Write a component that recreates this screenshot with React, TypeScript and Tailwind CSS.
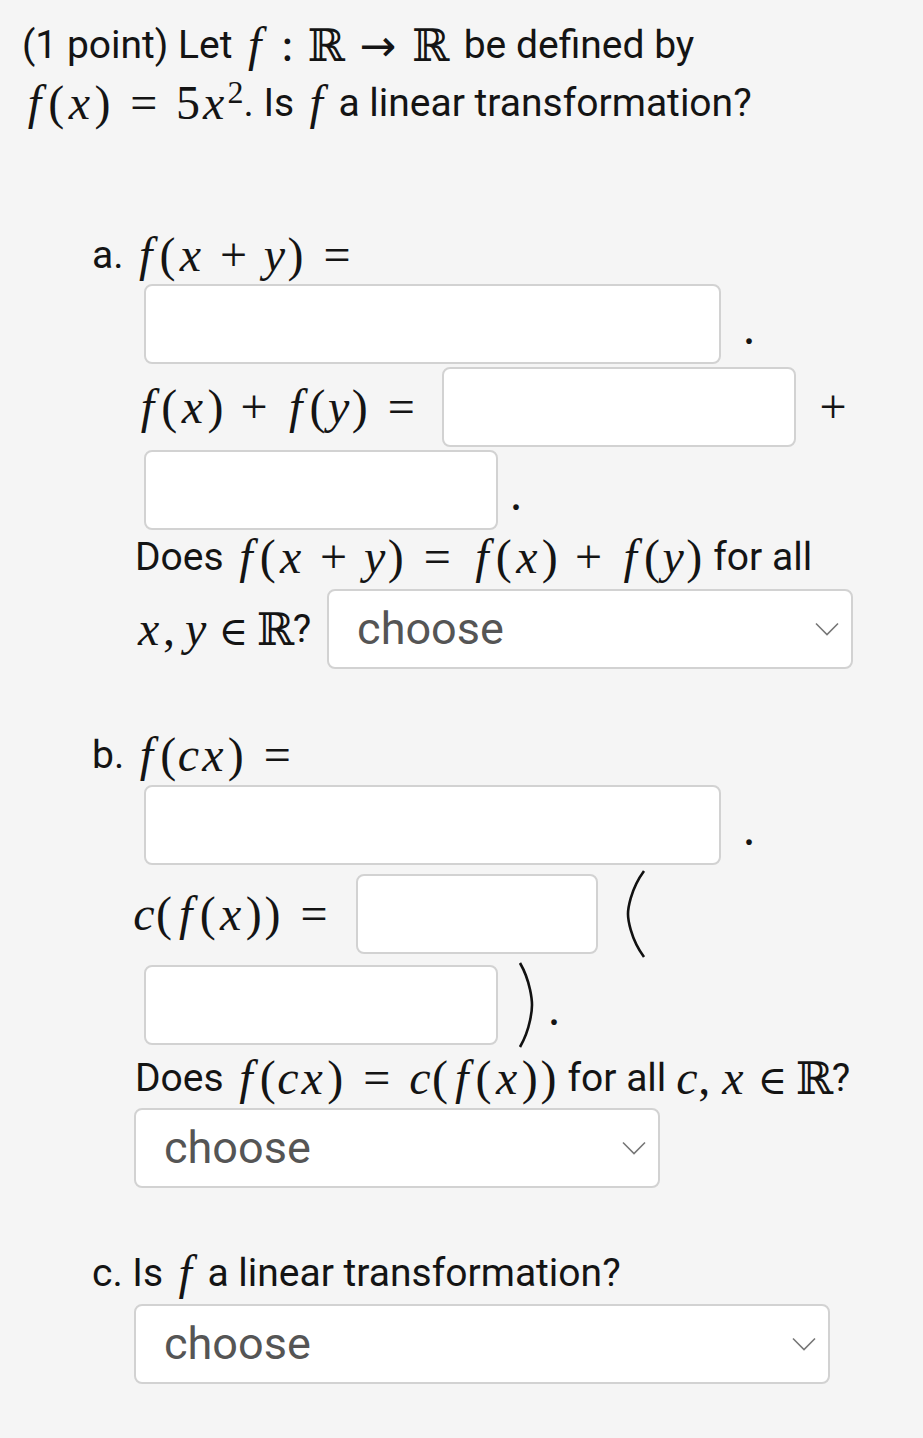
import React from 'react';

const mathCls = "font-['Liberation_Serif','DejaVu_Serif',serif] text-[48px] leading-none whitespace-nowrap";

// glyph boxes sized to Computer Modern advance widths
const F = () => <span className="inline-block w-[0.52em] text-center italic">f</span>;
const X = () => <span className="inline-block w-[0.57em] text-center italic">x</span>;
const Y = () => <span className="inline-block w-[0.49em] text-center italic">y</span>;
const C = () => <span className="inline-block w-[0.45em] text-center italic">c</span>;
const L = () => <span className="inline-block w-[0.39em] text-center">(</span>;
const R = () => <span className="inline-block w-[0.39em] text-center">)</span>;
const Plus = () => <span className="mx-[0.22em] inline-block w-[0.78em] text-center">+</span>;
const Eq = () => <span className="mx-[0.28em] inline-block w-[0.78em] text-center">=</span>;
const In = () => (
  <span className="mx-[0.28em] inline-block w-[0.67em] text-center font-['DejaVu_Serif',serif] text-[40px]">∈</span>
);
const Comma = () => <span className="mr-[0.17em] inline-block w-[0.28em] text-center">,</span>;
const RR = () => (
  <span className="inline-block w-[0.8em] text-center font-['DejaVu_Serif',serif] text-[45px]">ℝ</span>
);

function Box({ w }: { w: string }) {
  return (
    <input
      type="text"
      className={`h-[80px] ${w} rounded-[8px] border-2 border-[#d2d2d2] bg-white outline-none`}
    />
  );
}

function Choose({ w }: { w: string }) {
  return (
    <div
      className={`flex h-[80px] ${w} items-center justify-between rounded-[8px] border-2 border-[#d2d2d2] bg-white pl-[28px] pr-[12px]`}
    >
      <span className="text-[45px] text-[#555]">choose</span>
      <svg width="24" height="14" viewBox="0 0 24 14" fill="none">
        <path d="M1 1.5 L12 12.5 L23 1.5" stroke="#777" strokeWidth="1.6" />
      </svg>
    </div>
  );
}

function Dot({ ml }: { ml: string }) {
  return <span className={`${mathCls} ${ml} mt-[8px]`}>.</span>;
}

export default function App() {
  return (
    <div className="min-h-[1438px] bg-[#f5f5f5] font-['Roboto',sans-serif] text-[39px] text-[#141414]">
      <div className="pl-[22px] pt-[16px]">
        <div className="flex h-[58px] items-center whitespace-nowrap">
          <span>(1 point) Let&nbsp;</span>
          <span className={mathCls}>
            <F />
            <span className="mx-[0.28em]">:</span>
            <RR />
            <span className="mx-[0.28em] inline-block w-[1em] text-center font-['DejaVu_Sans',sans-serif] text-[44px]">→</span>
            <RR />
          </span>
          <span className="ml-[6px]">&nbsp;be defined by</span>
        </div>
        <div className="flex h-[58px] items-center whitespace-nowrap">
          <span className={mathCls}>
            <F />
            <L />
            <X />
            <R />
            <Eq />5<X />
            <sup className="text-[32px]">2</sup>
          </span>
          <span>. Is&nbsp;</span>
          <span className={mathCls}>
            <F />
          </span>
          <span>&nbsp;a linear transformation?</span>
        </div>
      </div>

      {/* part a */}
      <div className="mt-[94px] flex h-[58px] items-center pl-[92px]">
        <span>a.&nbsp;</span>
        <span className={mathCls}>
          <F />
          <L />
          <X />
          <Plus />
          <Y />
          <R />
          <Eq />
        </span>
      </div>
      <div className="flex items-center pl-[144px]">
        <Box w="w-[577px]" />
        <Dot ml="ml-[22px]" />
      </div>
      <div className="mt-[3px] flex items-center pl-[135px]">
        <span className={`${mathCls} mr-[8px]`}>
          <F />
          <L />
          <X />
          <R />
          <Plus />
          <F />
          <L />
          <Y />
          <R />
          <Eq />
        </span>
        <Box w="w-[354px]" />
        <span className={`${mathCls} ml-[24px]`}>+</span>
      </div>
      <div className="mt-[3px] flex items-center pl-[144px]">
        <Box w="w-[354px]" />
        <Dot ml="ml-[12px]" />
      </div>
      <div className="flex h-[54px] items-center pl-[135px] whitespace-nowrap">
        <span>Does&nbsp;</span>
        <span className={mathCls}>
          <F />
          <L />
          <X />
          <Plus />
          <Y />
          <R />
          <Eq />
          <F />
          <L />
          <X />
          <R />
          <Plus />
          <F />
          <L />
          <Y />
          <R />
        </span>
        <span>&nbsp;for all</span>
      </div>
      <div className="mt-[5px] flex items-center pl-[135px]">
        <span className={mathCls}>
          <X />
          <Comma />
          <Y />
          <In />
          <RR />
        </span>
        <span className="mr-[16px]">?</span>
        <Choose w="w-[526px]" />
      </div>

      {/* part b */}
      <div className="mt-[57px] flex h-[58px] items-center pl-[92px]">
        <span>b.&nbsp;</span>
        <span className={mathCls}>
          <F />
          <L />
          <C />
          <X />
          <R />
          <Eq />
        </span>
      </div>
      <div className="mt-[1px] flex items-center pl-[144px]">
        <Box w="w-[577px]" />
        <Dot ml="ml-[22px]" />
      </div>
      <div className="mt-[9px] flex items-center pl-[133px]">
        <span className={`${mathCls} mr-[10px]`}>
          <C />
          <L />
          <F />
          <L />
          <X />
          <R />
          <R />
          <Eq />
        </span>
        <Box w="w-[242px]" />
        <svg className="-my-[4px] ml-[26px] self-start" width="22" height="88" viewBox="0 0 22 88">
          <path d="M20 1 C6 20 4 40 4 44 C4 48 6 68 20 87" stroke="#111" strokeWidth="2.6" fill="none" />
        </svg>
      </div>
      <div className="mt-[11px] flex items-center pl-[144px]">
        <Box w="w-[354px]" />
        <svg className="-my-[3px] ml-[20px] self-start" width="18" height="86" viewBox="0 0 18 86">
          <path d="M2 1 C13 20 14 40 14 43 C14 46 13 66 2 85" stroke="#111" strokeWidth="2.6" fill="none" />
        </svg>
        <Dot ml="ml-[12px]" />
      </div>
      <div className="mt-[4px] flex h-[58px] items-center pl-[135px] whitespace-nowrap">
        <span>Does&nbsp;</span>
        <span className={mathCls}>
          <F />
          <L />
          <C />
          <X />
          <R />
          <Eq />
          <C />
          <L />
          <F />
          <L />
          <X />
          <R />
          <R />
        </span>
        <span>&nbsp;for all&nbsp;</span>
        <span className={mathCls}>
          <C />
          <Comma />
          <X />
          <In />
          <RR />
        </span>
        <span>?</span>
      </div>
      <div className="mt-[1px] pl-[134px]">
        <Choose w="w-[526px]" />
      </div>

      {/* part c */}
      <div className="mt-[56px] flex h-[58px] items-center pl-[92px] whitespace-nowrap">
        <span>c. Is&nbsp;</span>
        <span className={mathCls}>
          <F />
        </span>
        <span>&nbsp;a linear transformation?</span>
      </div>
      <div className="mt-[2px] pl-[134px]">
        <Choose w="w-[696px]" />
      </div>
    </div>
  );
}
